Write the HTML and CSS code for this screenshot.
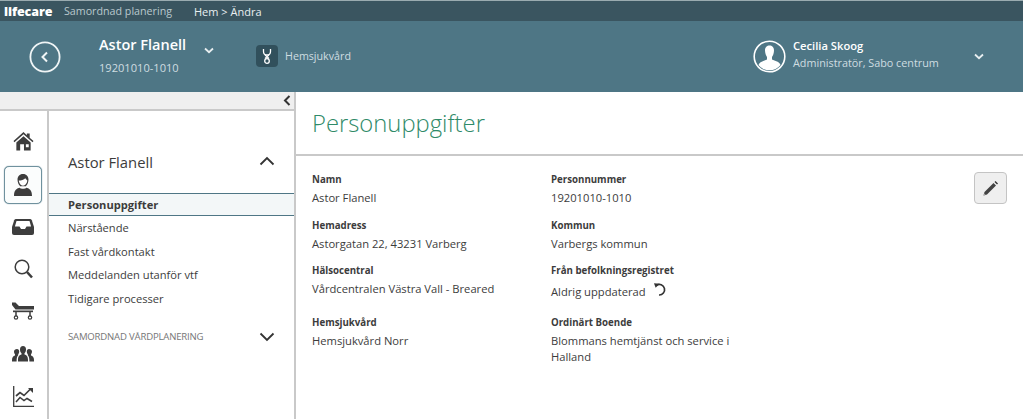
FILE: index.html
```html
<!DOCTYPE html>
<html lang="sv">
<head>
<meta charset="utf-8">
<title>Personuppgifter</title>
<link rel="stylesheet" href="styles.css">
</head>
<body>
<div class="topbar">
  <span class="brand">lifecare</span>
  <span class="product">Samordnad planering</span>
  <span class="crumbs">Hem &gt; Ändra</span>
</div>
<header class="patient">
  <div class="back">
    <svg width="32" height="32" viewBox="0 0 32 32"><circle cx="16" cy="16" r="14.6" fill="none" stroke="#f0f5f6" stroke-width="1.8"/><path d="M18 11.5 13.500 16l4.500 4.500" fill="none" stroke="#f0f5f6" stroke-width="2"/></svg>
  </div>
  <div class="who">
    <div class="who-name">Astor Flanell</div>
    <div class="who-id">19201010-1010</div>
  </div>
  <svg class="caret-small" width="10" height="7" viewBox="0 0 10 7"><path d="M1 1.500 5 5.200 9 1.500" fill="none" stroke="#e8eff1" stroke-width="1.800"/></svg>
  <div class="care">
    <span class="care-icon">
      <svg width="14" height="18" viewBox="0 0 14 18"><path d="M3.500 2v2.500c0 2.200 1.500 3.500 3.500 3.500s3.500-1.300 3.500-3.500V2" fill="none" stroke="#fff" stroke-width="1.300"/><path d="M5 8 9 11.500M9 8 5 11.500" stroke="#fff" stroke-width="1.200"/><circle cx="7" cy="14" r="2.300" fill="none" stroke="#fff" stroke-width="1.300"/></svg>
    </span>
    <span class="care-label">Hemsjukvård</span>
  </div>
  <div class="user">
    <svg width="33" height="33" viewBox="0 0 33 33"><circle cx="16.500" cy="16.500" r="15.300" fill="#4e7685" stroke="#fff" stroke-width="1.600"/><path d="M12 10.500c0-3.500 2-5 4.500-5s4.500 1.500 4.500 5c0 2.500-1 5-2 6.500v2.500c3 1.500 7.500 2 8.500 5.500a14 14 0 0 1-22 0c1-3.500 5.500-4 8.500-5.500V17c-1-1.500-2-4-2-6.500z" fill="#fff"/></svg>
    <div class="user-text">
      <div class="user-name">Cecilia Skoog</div>
      <div class="user-role">Administratör, Sabo centrum</div>
    </div>
    <svg class="caret-user" width="10" height="7" viewBox="0 0 10 7"><path d="M1 1.500 5 5.200 9 1.500" fill="none" stroke="#e8eff1" stroke-width="1.800"/></svg>
  </div>
</header>
<div class="workspace">
  <div class="sidebar">
    <div class="collapse-bar">
      <svg width="8" height="11" viewBox="0 0 8 11"><path d="M6.500 1 2 5.500 6.500 10" fill="none" stroke="#333" stroke-width="2"/></svg>
    </div>
    <div class="sidebar-body">
      <nav class="rail">
        <a class="rail-item"><svg width="21" height="20" viewBox="0 0 22 21"><path d="M11 1 0.500 10.500l1 1.200L11 3.500l9.500 8.200 1-1.200L17.500 7V2.500h-3v2z" fill="#3d3d3d"/><path d="M3.500 12 11 5.500 18.500 12v8.500h-7v-6.500H7.500v6.500h-4zM13.500 14h3v3h-3z" fill="#3d3d3d" fill-rule="evenodd"/></svg></a>
        <a class="rail-item active"><svg width="20" height="24" viewBox="0 0 20 24"><path d="M10 1C6.400 1 4.500 3.500 4.500 6.500c0 2.500 1 5 2.500 6.500v1.500C4 15.500 1 16.500 1 23h18c0-6.500-3-7.500-6-8.500V13c1.500-1.500 2.500-4 2.500-6.500C15.500 3.500 13.600 1 10 1z" fill="#3d3d3d"/><path d="M5.800 7.500c2.500 0 5-.6 6.500-2.300.7 1 1.400 1.800 2 2.300-.2 2.600-2 5.200-4.300 5.200S6 10 5.800 7.500z" fill="#fff"/><path d="M6.500 14.800C8 16.200 12 16.200 13.500 14.800l-.5-1.500H7z" fill="#fff"/></svg></a>
        <a class="rail-item"><svg width="22" height="16" viewBox="0 0 22 16"><path d="M4 0h14a2 2 0 0 1 1.800 1.200L22 8v6a2 2 0 0 1-2 2H2a2 2 0 0 1-2-2V8l2.200-6.800A2 2 0 0 1 4 0z" fill="#3d3d3d"/><path d="M4.500 2h13l1.600 5.500H14.500L13 10H9L7.500 7.500H2.900z" fill="#fff"/></svg></a>
        <a class="rail-item"><svg width="19" height="20" viewBox="0 0 19 20"><circle cx="8" cy="8" r="6.800" fill="none" stroke="#3d3d3d" stroke-width="1.500"/><path d="M13 13l5 5.500" stroke="#3d3d3d" stroke-width="2.600"/></svg></a>
        <a class="rail-item"><svg width="22" height="18" viewBox="0 0 22 18"><path d="M0 .5h3.500L7 4h15v3.500H3.500L0 3z" fill="#3d3d3d"/><path d="M1 8.500h20v1.700H1z" fill="#3d3d3d"/><path d="M4 10V14.500M18 10V14.500" stroke="#3d3d3d" stroke-width="1.500"/><circle cx="4" cy="15.500" r="1.700" fill="none" stroke="#3d3d3d" stroke-width="1.200"/><circle cx="18" cy="15.500" r="1.700" fill="none" stroke="#3d3d3d" stroke-width="1.200"/></svg></a>
        <a class="rail-item"><svg width="22" height="16" viewBox="0 0 22 16"><path d="M11 0c2 0 3 1.500 3 3.500 0 1.600-.6 3-1.500 3.800v1.200c2 .7 3.500 1.500 3.500 5.500v1.500H6V14c0-4 1.500-4.800 3.500-5.500V7.300C8.600 6.500 8 5.100 8 3.500 8 1.500 9 0 11 0z" fill="#3d3d3d"/><path d="M5 3c1.500 0 2.200 1 2.200 2.500 0 1.200-.4 2.200-1 2.800v1C5 10.500 4.600 12 4.600 15.500H0V14c0-3 1.200-3.800 3-4.500v-1.200c-.6-.6-1-1.600-1-2.800C2 4 3.300 3 5 3zM17 3c-1.500 0-2.200 1-2.200 2.500 0 1.200.4 2.200 1 2.800v1c1.200 1.200 1.600 2.700 1.600 6.200H22V14c0-3-1.200-3.800-3-4.500v-1.200c.6-.6 1-1.600 1-2.800C20 4 18.700 3 17 3z" fill="#3d3d3d"/></svg></a>
        <a class="rail-item"><svg width="21" height="21" viewBox="0 0 21 21"><path d="M.7 0v20.300H21" fill="none" stroke="#3d3d3d" stroke-width="1.300"/><path d="M3 10l4-3.500 4 3 7-7" fill="none" stroke="#3d3d3d" stroke-width="1.700"/><path d="M15 2h5v5z" fill="#3d3d3d"/><path d="M3 16l4-4.500 4 3 3-2 5 3" fill="none" stroke="#3d3d3d" stroke-width="1.500"/></svg></a>
      </nav>
      <div class="submenu">
        <div class="sub-head">
          <span class="sub-title">Astor Flanell</span>
          <svg class="chev" width="16" height="10" viewBox="0 0 16 10"><path d="M1.500 8.500 8 2l6.500 6.500" fill="none" stroke="#333" stroke-width="1.800"/></svg>
        </div>
        <div class="sub-item current">Personuppgifter</div>
        <div class="sub-item">Närstående</div>
        <div class="sub-item">Fast vårdkontakt</div>
        <div class="sub-item">Meddelanden utanför vtf</div>
        <div class="sub-item">Tidigare processer</div>
        <div class="sub-section">
          <span class="section-label">SAMORDNAD VÅRDPLANERING</span>
          <svg class="chev" width="16" height="10" viewBox="0 0 16 10"><path d="M1.500 1.500 8 8l6.500-6.500" fill="none" stroke="#333" stroke-width="1.800"/></svg>
        </div>
      </div>
    </div>
  </div>
  <main class="content">
    <h1 class="page-title">Personuppgifter</h1>
    <div class="details">
      <div class="grid">
        <div class="field"><div class="label">Namn</div><div class="value">Astor Flanell</div></div>
        <div class="field"><div class="label">Personnummer</div><div class="value">19201010-1010</div></div>
        <div class="field"><div class="label">Hemadress</div><div class="value">Astorgatan 22, 43231 Varberg</div></div>
        <div class="field"><div class="label">Kommun</div><div class="value">Varbergs kommun</div></div>
        <div class="field"><div class="label">Hälsocentral</div><div class="value">Vårdcentralen Västra Vall - Breared</div></div>
        <div class="field tall"><div class="label">Från befolkningsregistret</div><div class="value refresh">Aldrig uppdaterad <svg width="15" height="15" viewBox="0 0 15 15"><path d="M3.500 3.200A5.300 5.300 0 1 1 6 13" fill="none" stroke="#333" stroke-width="1.700"/><path d="M1 1.200l5.500.6-3.800 4z" fill="#333"/></svg></div></div>
        <div class="field"><div class="label">Hemsjukvård</div><div class="value">Hemsjukvård Norr</div></div>
        <div class="field"><div class="label">Ordinärt Boende</div><div class="value">Blommans hemtjänst och service i Halland</div></div>
      </div>
      <button class="edit" type="button" aria-label="Redigera"><svg width="17" height="17" viewBox="0 0 17 17"><path d="M1.500 15.500l1-3.500L11.500 3l2.500 2.500-9 9z" fill="#444"/><path d="M12.500 2l1-1 2.500 2.500-1 1z" fill="#333"/><path d="M1.500 15.500l.6-2.200 1.600 1.600z" fill="#aaa"/></svg></button>
    </div>
  </main>
</div>
</body>
</html>
```

FILE: styles.css
```css
* { box-sizing: border-box; }
html, body { margin: 0; height: 100%; }
body {
  width: 1023px;
  height: 419px;
  overflow: hidden;
  font-family: "Open Sans", sans-serif;
  font-size: 12px;
  color: #3c3c3c;
  background: #fff;
  display: flex;
  flex-direction: column;
}
.topbar {
  height: 21px;
  flex: none;
  background: #3a5560;
  border-top: 1px solid #9aabb0;
  display: flex;
  align-items: center;
  padding-left: 4px;
  color: #fff;
}
.brand { font-weight: 800; font-size: 12.500px; letter-spacing: -0.100px; width: 60px; }
.product { color: #b9c8cd; font-size: 10.700px; width: 130px; }
.crumbs { color: #e8eff1; font-size: 11px; }
.patient {
  height: 71px;
  flex: none;
  background: #4e7685;
  display: flex;
  align-items: center;
  padding-left: 29px;
  color: #fff;
}
.back { width: 32px; height: 32px; margin-right: 38px; margin-top: 1px; }
.who { width: 105px; margin-top: -1px; }
.who-name { font-size: 14.500px; font-weight: 600; line-height: 20px; }
.who-id { font-size: 11.100px; color: #cfdde1; line-height: 20px; margin-top: 3px; }
.caret-small { margin-top: -13px; }
.care { display: flex; align-items: center; margin-left: 42px; margin-top: -2px; }
.care-icon {
  width: 22px;
  height: 22px;
  background: #31505c;
  border-radius: 4px;
  display: flex;
  align-items: center;
  justify-content: center;
}
.care-label { font-size: 10.700px; color: #cfdde1; margin-left: 7px; }
.user { display: flex; align-items: center; margin-left: auto; margin-right: 39px; }
.user-text { margin-left: 7px; width: 181px; margin-top: -3px; }
.user-name { font-size: 11.200px; font-weight: 600; line-height: 16px; }
.user-role { font-size: 10.800px; color: #cfdde1; line-height: 18px; }
.workspace { flex: 1; display: flex; min-height: 0; }
.sidebar { width: 296px; flex: none; display: flex; flex-direction: column; border-right: 2px solid #c9c9c9; }
.collapse-bar {
  height: 19px;
  flex: none;
  background: #efefef;
  border-bottom: 2px solid #c9c9c9;
  display: flex;
  align-items: center;
  justify-content: flex-end;
  padding-right: 3px;
}
.sidebar-body { flex: 1; display: flex; min-height: 0; }
.rail {
  width: 49px;
  flex: none;
  border-right: 2px solid #c9c9c9;
  display: flex;
  flex-direction: column;
  align-items: center;
  padding-right: 1px;
  padding-top: 9px;
}
.rail-item { width: 38px; height: 42.400px; display: flex; align-items: center; justify-content: center; flex: none; }
.rail-item.active { height: 38px; border: 1px solid #6f919e; border-radius: 5px; background: #fbfdfd; margin: 4px 0 1px; box-shadow: 0 0 1px #4e7685; }
.submenu { flex: 1; display: flex; flex-direction: column; }
.sub-head { height: 82px; display: flex; align-items: center; justify-content: space-between; padding: 20px 19px 0; }
.sub-title { font-size: 14.800px; font-weight: 500; }
.sub-head .chev { margin-top: -2px; }
.sub-item { height: 23.400px; line-height: 24px; padding-left: 19px; font-size: 11.150px; flex: none; }
.sub-item.current { font-weight: 700; background: #f3f7f8; border-top: 1px solid #4e7685; border-bottom: 1px solid #4e7685; line-height: 21px; }
.sub-section { display: flex; align-items: center; justify-content: space-between; padding: 0 19px; margin-top: 17px; height: 20px; }
.section-label { font-size: 9.600px; color: #777; letter-spacing: -0.200px; }
.content { flex: 1; display: flex; flex-direction: column; min-width: 0; }
.page-title {
  margin: 0;
  height: 64px;
  flex: none;
  border-bottom: 2px solid #c9c9c9;
  font-size: 23.800px;
  font-weight: 300;
  color: #2f8a68;
  padding: 14px 0 0 16px;
  line-height: 34px;
}
.details { flex: 1; display: flex; padding: 16px 16px 0 16px; justify-content: space-between; align-items: flex-start; }
.grid { display: grid; grid-template-columns: 239px 190px; grid-auto-rows: auto; }
.field { margin-bottom: 11px; }
.field.tall { margin-bottom: 14px; }
.label { font-size: 9.700px; font-weight: 700; line-height: 16px; }
.value { font-size: 11.200px; line-height: 16.500px; margin-top: 2px; }
.refresh { display: flex; align-items: center; gap: 7px; margin-top: 5px; }
.refresh svg { margin-top: -5px; }
.edit {
  width: 33px;
  height: 32px;
  margin-top: 0;
  padding: 0;
  border: 1px solid #c4c4c4;
  border-radius: 4px;
  background: #efefef;
  display: flex;
  align-items: center;
  justify-content: center;
}
```
